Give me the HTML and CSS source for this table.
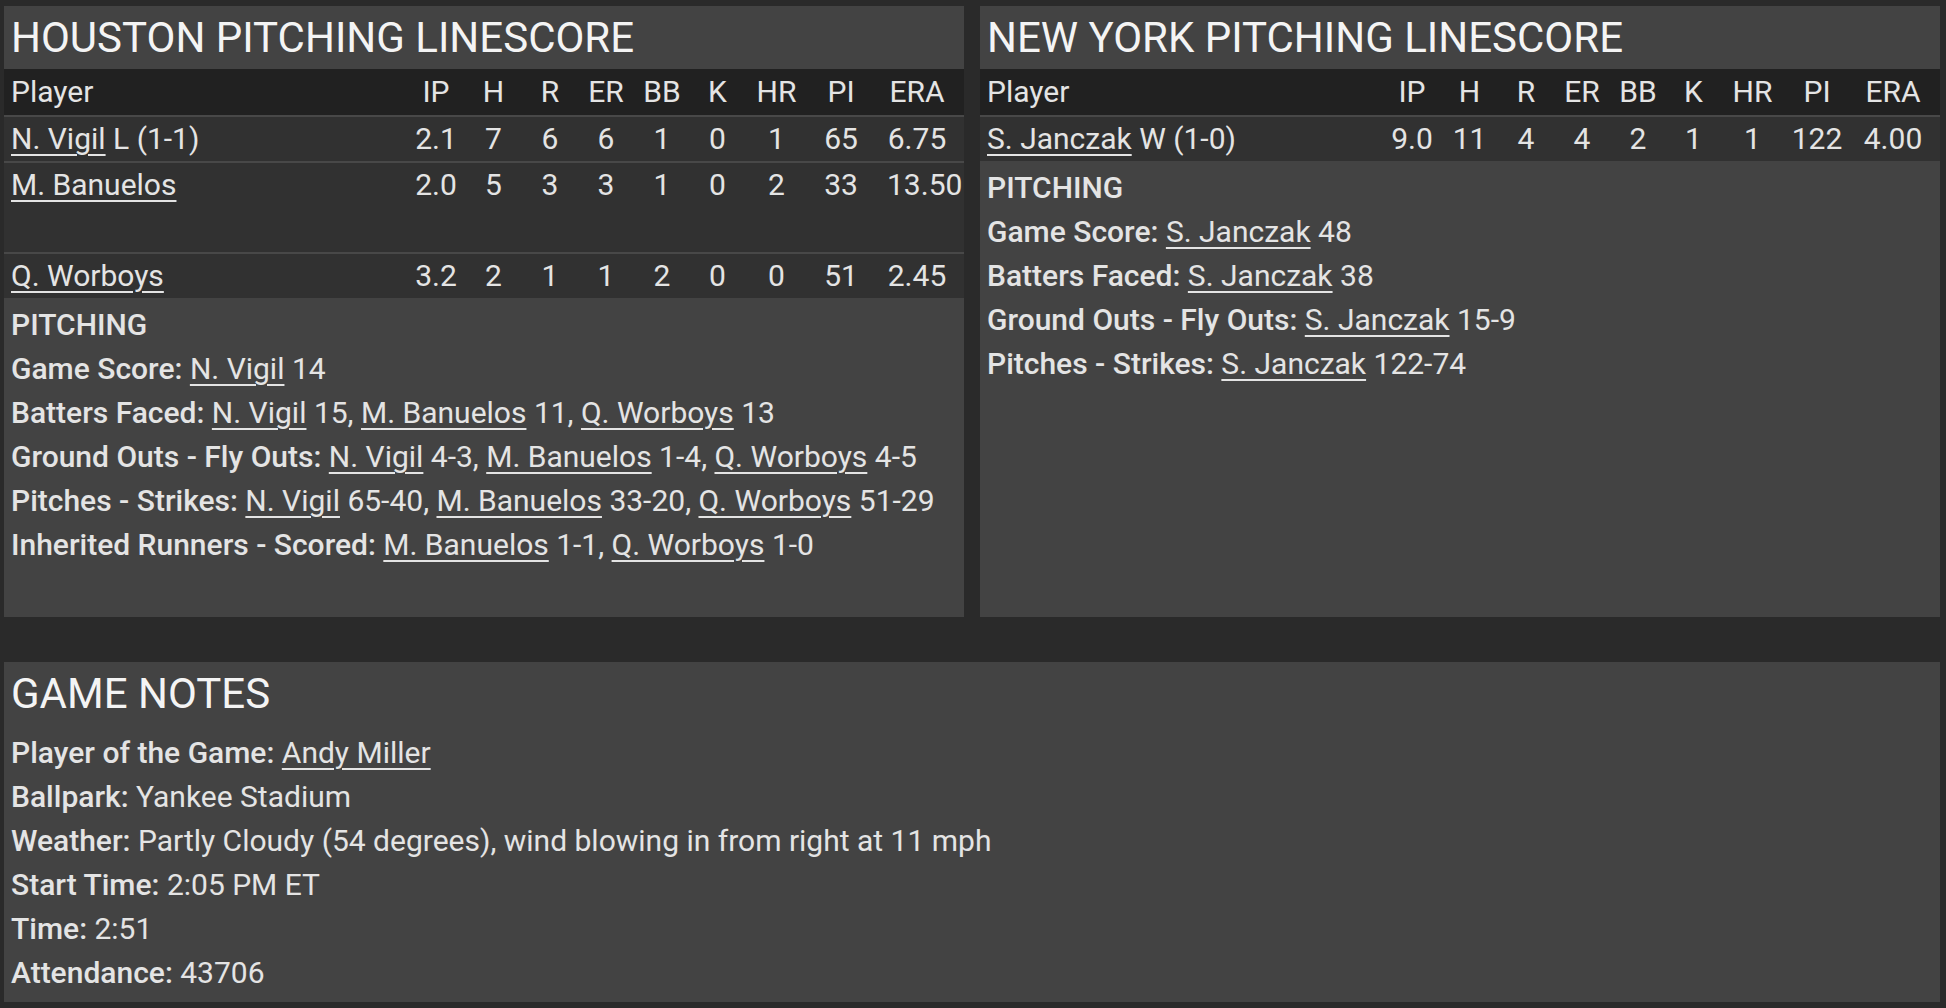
FILE: index.html
```html
<!DOCTYPE html>
<html lang="en">
<head>
<meta charset="utf-8">
<title>Box Score - Pitching</title>
<link rel="stylesheet" href="styles.css">
</head>
<body>
<div class="top">
  <section class="panel">
    <h2 class="panel-title">HOUSTON PITCHING LINESCORE</h2>
    <div class="line head">
      <span class="name">Player</span><span>IP</span><span>H</span><span>R</span><span>ER</span><span>BB</span><span>K</span><span>HR</span><span>PI</span><span class="era">ERA</span>
    </div>
    <div class="line">
      <span class="name"><a>N. Vigil</a> L (1-1)</span><span>2.1</span><span>7</span><span>6</span><span>6</span><span>1</span><span>0</span><span>1</span><span>65</span><span class="era">6.75</span>
    </div>
    <div class="line tall">
      <span class="name"><a>M. Banuelos</a></span><span>2.0</span><span>5</span><span>3</span><span>3</span><span>1</span><span>0</span><span>2</span><span>33</span><span class="era">13.50</span>
    </div>
    <div class="line">
      <span class="name"><a>Q. Worboys</a></span><span>3.2</span><span>2</span><span>1</span><span>1</span><span>2</span><span>0</span><span>0</span><span>51</span><span class="era">2.45</span>
    </div>
    <div class="stats">
      <div class="stat-head">PITCHING</div>
      <div><b>Game Score:</b> <a>N. Vigil</a> 14</div>
      <div><b>Batters Faced:</b> <a>N. Vigil</a> 15, <a>M. Banuelos</a> 11, <a>Q. Worboys</a> 13</div>
      <div><b>Ground Outs - Fly Outs:</b> <a>N. Vigil</a> 4-3, <a>M. Banuelos</a> 1-4, <a>Q. Worboys</a> 4-5</div>
      <div><b>Pitches - Strikes:</b> <a>N. Vigil</a> 65-40, <a>M. Banuelos</a> 33-20, <a>Q. Worboys</a> 51-29</div>
      <div><b>Inherited Runners - Scored:</b> <a>M. Banuelos</a> 1-1, <a>Q. Worboys</a> 1-0</div>
    </div>
  </section>
  <section class="panel">
    <h2 class="panel-title">NEW YORK PITCHING LINESCORE</h2>
    <div class="line head">
      <span class="name">Player</span><span>IP</span><span>H</span><span>R</span><span>ER</span><span>BB</span><span>K</span><span>HR</span><span>PI</span><span class="era">ERA</span>
    </div>
    <div class="line">
      <span class="name"><a>S. Janczak</a> W (1-0)</span><span>9.0</span><span>11</span><span>4</span><span>4</span><span>2</span><span>1</span><span>1</span><span>122</span><span class="era">4.00</span>
    </div>
    <div class="stats">
      <div class="stat-head">PITCHING</div>
      <div><b>Game Score:</b> <a>S. Janczak</a> 48</div>
      <div><b>Batters Faced:</b> <a>S. Janczak</a> 38</div>
      <div><b>Ground Outs - Fly Outs:</b> <a>S. Janczak</a> 15-9</div>
      <div><b>Pitches - Strikes:</b> <a>S. Janczak</a> 122-74</div>
    </div>
  </section>
</div>
<section class="panel notes">
  <h2 class="panel-title">GAME NOTES</h2>
  <div class="notes-body">
    <div><b>Player of the Game:</b> <a>Andy Miller</a></div>
    <div><b>Ballpark:</b> Yankee Stadium</div>
    <div><b>Weather:</b> Partly Cloudy (54 degrees), wind blowing in from right at 11 mph</div>
    <div><b>Start Time:</b> 2:05 PM ET</div>
    <div><b>Time:</b> 2:51</div>
    <div><b>Attendance:</b> 43706</div>
  </div>
</section>
</body>
</html>
```
FILE: styles.css
```css
html, body {
  margin: 0;
}
body {
  background: #2a2a2a;
  padding: 6px 6px 6px 4px;
  font-family: Roboto, "Liberation Sans", sans-serif;
  font-size: 30px;
  color: #e4e4e4;
  box-sizing: border-box;
  height: 1008px;
}
.top {
  display: flex;
  gap: 16px;
}
.panel {
  background: #434343;
  width: 960px;
  display: flex;
  flex-direction: column;
}
.panel-title {
  margin: 0;
  height: 63px;
  line-height: 63px;
  font-size: 42px;
  font-weight: 400;
  color: #f4f4f4;
  padding: 0 7px;
  white-space: nowrap;
}
.line {
  display: grid;
  grid-template-columns: 1fr 58px 57px 56px 56px 56px 55px 63px 66px 73px;
  padding: 0 17px 0 7px;
  height: 44px;
  line-height: 44px;
  background: #313131;
  border-top: 2px solid #484848;
  white-space: nowrap;
}
.line > span {
  text-align: center;
}
.line > .name {
  text-align: left;
}
.line > .era {
  padding-left: 13px;
}
.line.head {
  background: #212121;
  border-top: 0;
  height: 46px;
  line-height: 46px;
}
.line.tall {
  height: 89px;
}
a {
  color: inherit;
  text-decoration: underline;
  text-decoration-thickness: 2px;
  text-underline-offset: 5px;
}
b {
  font-weight: 500;
}
.stats {
  padding: 5px 7px 50px;
  line-height: 44px;
  white-space: nowrap;
}
.stat-head {
  font-weight: 500;
}
.notes {
  width: 1936px;
  margin-top: 45px;
  height: 340px;
}
.notes-body {
  padding: 6px 7px 7px;
  line-height: 44px;
}
```
